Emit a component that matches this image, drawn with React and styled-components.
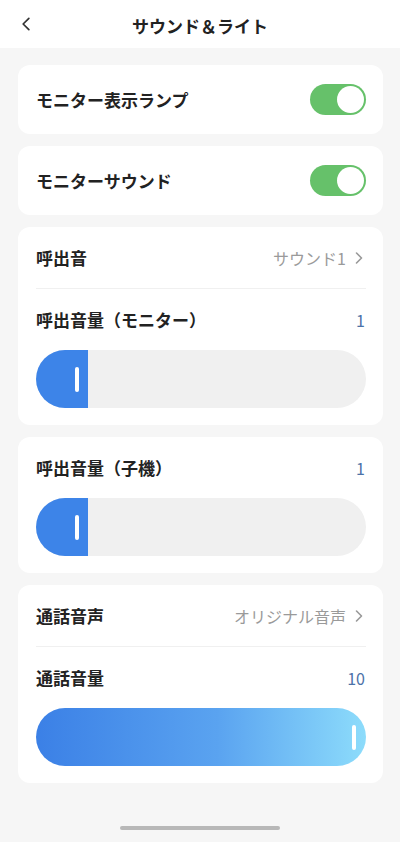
import React from 'react'
import styled, { createGlobalStyle } from 'styled-components'

const GlobalStyle = createGlobalStyle`
  html, body {
    margin: 0;
    padding: 0;
    background: #f6f6f6;
    font-family: "Noto Sans CJK JP", "Noto Sans", sans-serif;
  }
`

const Page = styled.div`
  width: 400px;
  min-height: 842px;
  background: #f6f6f6;
  display: flex;
  flex-direction: column;
`

const Header = styled.div`
  height: 48px;
  background: #fff;
  display: flex;
  align-items: center;
  justify-content: center;
  position: relative;
`

const Back = styled.div`
  position: absolute;
  left: 18px;
  top: 15px;
  width: 16px;
  height: 18px;
  display: flex;
`

const Title = styled.div`
  font-size: 17px;
  font-weight: 700;
  color: #222;
  margin-top: 2px;
`

const List = styled.div`
  display: flex;
  flex-direction: column;
  gap: 12px;
  padding: 17px 17px 0 18px;
`

const Card = styled.div`
  background: #fff;
  border-radius: 12px;
  padding: 0 17px 0 18px;
  padding-bottom: ${(p) => p.$bottom || 0}px;
`

const Row = styled.div`
  height: ${(p) => p.$h || 61}px;
  display: flex;
  align-items: center;
  justify-content: space-between;
  border-bottom: ${(p) => (p.$divider ? '1px solid #f0f0f0' : 'none')};
`

const Label = styled.div`
  font-size: 17px;
  font-weight: 700;
  color: #222;
`

const Value = styled.div`
  display: flex;
  align-items: center;
  gap: 6px;
  font-size: 16px;
  color: #9a9a9a;
`

const Num = styled.div`
  font-size: 16px;
  color: #4c72a8;
  margin-right: 1px;
`

const Toggle = styled.div`
  width: 56px;
  height: 31px;
  border-radius: 16px;
  background: #66c16a;
  display: flex;
  align-items: center;
  justify-content: flex-end;
  padding: 0 2px;
  box-sizing: border-box;
`

const Knob = styled.div`
  width: 27px;
  height: 27px;
  border-radius: 50%;
  background: #fff;
`

const Track = styled.div`
  height: 58px;
  border-radius: 29px;
  background: #f0f0f0;
  overflow: hidden;
  display: flex;
`

const Fill = styled.div`
  height: 100%;
  background: ${(p) => (p.$full ? 'linear-gradient(90deg, #3b80e6 0%, #5aa3f0 55%, #8ddcfb 100%)' : '#3d84e8')};
  display: flex;
  align-items: center;
  justify-content: flex-end;
  padding-right: ${(p) => (p.$full ? 10 : 9)}px;
  box-sizing: border-box;
`

const Handle = styled.div`
  width: 4px;
  height: 25px;
  border-radius: 2px;
  background: #fff;
`

const HomeBar = styled.div`
  width: 160px;
  height: 4px;
  border-radius: 2px;
  background: #b8b8b8;
  margin: 43px auto 0;
`

const Chevron = ({ size = 14, color = '#999', dir = 'right', sw = 1.6 }) => (
  <svg width={size} height={size} viewBox="0 0 14 14" fill="none">
    <path
      d={dir === 'right' ? 'M4.5 2 L9.5 7 L4.5 12' : 'M9.5 2 L4.5 7 L9.5 12'}
      stroke={color}
      strokeWidth={sw}
      strokeLinecap="round"
      strokeLinejoin="round"
    />
  </svg>
)

function Slider({ percent }) {
  const full = percent >= 100
  return (
    <Track>
      <Fill $full={full} style={{ width: full ? '100%' : percent + 'px' }}>
        <Handle />
      </Fill>
    </Track>
  )
}

export default function App() {
  return (
    <Page>
      <GlobalStyle />
      <Header>
        <Back>
          <Chevron size={18} color="#333" dir="left" sw={1.5} />
        </Back>
        <Title>サウンド＆ライト</Title>
      </Header>
      <List>
        <Card>
          <Row $h={69}>
            <Label>モニター表示ランプ</Label>
            <Toggle><Knob /></Toggle>
          </Row>
        </Card>
        <Card>
          <Row $h={69}>
            <Label>モニターサウンド</Label>
            <Toggle><Knob /></Toggle>
          </Row>
        </Card>
        <Card $bottom={17}>
          <Row $divider>
            <Label>呼出音</Label>
            <Value>サウンド1<Chevron /></Value>
          </Row>
          <Row>
            <Label>呼出音量（モニター）</Label>
            <Num>1</Num>
          </Row>
          <Slider percent={52} />
        </Card>
        <Card $bottom={17}>
          <Row>
            <Label>呼出音量（子機）</Label>
            <Num>1</Num>
          </Row>
          <Slider percent={52} />
        </Card>
        <Card $bottom={17}>
          <Row $divider>
            <Label>通話音声</Label>
            <Value>オリジナル音声<Chevron /></Value>
          </Row>
          <Row>
            <Label>通話音量</Label>
            <Num>10</Num>
          </Row>
          <Slider percent={100} />
        </Card>
      </List>
      <HomeBar />
    </Page>
  )
}
